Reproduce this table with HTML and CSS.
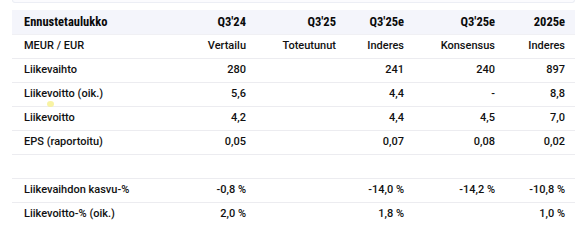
FILE: index.html
```html
<!DOCTYPE html>
<html lang="fi">

<head>
    <meta charset="UTF-8">
    <meta name="viewport" content="width=device-width, initial-scale=1.0">
    <title>Ennustetaulukko</title>
    <link rel="stylesheet" href="styles.css">
</head>

<body>
    <div class="wrap">
        <div class="card-edge"></div>
        <table class="forecast">
            <colgroup>
                <col class="c-label">
                <col class="c-q324">
                <col class="c-q325">
                <col class="c-q325e">
                <col class="c-cons">
                <col class="c-2025e">
            </colgroup>
            <thead>
                <tr>
                    <th>Ennustetaulukko</th>
                    <th>Q3'24</th>
                    <th>Q3'25</th>
                    <th>Q3'25e</th>
                    <th>Q3'25e</th>
                    <th>2025e</th>
                </tr>
            </thead>
            <tbody>
                <tr>
                    <td>MEUR / EUR</td>
                    <td>Vertailu</td>
                    <td>Toteutunut</td>
                    <td>Inderes</td>
                    <td>Konsensus</td>
                    <td>Inderes</td>
                </tr>
                <tr>
                    <td>Liikevaihto</td>
                    <td>280</td>
                    <td></td>
                    <td>241</td>
                    <td>240</td>
                    <td>897</td>
                </tr>
                <tr>
                    <td>Liikevoitto (oik.)</td>
                    <td>5,6</td>
                    <td></td>
                    <td>4,4</td>
                    <td>-</td>
                    <td>8,8</td>
                </tr>
                <tr>
                    <td>Liikevoitto</td>
                    <td>4,2</td>
                    <td></td>
                    <td>4,4</td>
                    <td>4,5</td>
                    <td>7,0</td>
                </tr>
                <tr>
                    <td>EPS (raportoitu)</td>
                    <td>0,05</td>
                    <td></td>
                    <td>0,07</td>
                    <td>0,08</td>
                    <td>0,02</td>
                </tr>
                <tr class="spacer">
                    <td></td>
                    <td></td>
                    <td></td>
                    <td></td>
                    <td></td>
                    <td></td>
                </tr>
                <tr>
                    <td>Liikevaihdon kasvu-%</td>
                    <td>-0,8 %</td>
                    <td></td>
                    <td>-14,0 %</td>
                    <td>-14,2 %</td>
                    <td>-10,8 %</td>
                </tr>
                <tr class="last">
                    <td>Liikevoitto-% (oik.)</td>
                    <td>2,0 %</td>
                    <td></td>
                    <td>1,8 %</td>
                    <td></td>
                    <td>1,0 %</td>
                </tr>
            </tbody>
        </table>
        <span class="cursor-dot"></span>
    </div>
</body>

</html>
```

FILE: styles.css
```css
* {
    padding: 0;
    margin: 0;
    box-sizing: border-box;
}

body {
    background: #fff;
    font-family: Roboto, "Liberation Sans", sans-serif;
    color: #111;
}

.wrap {
    position: relative;
    width: 563px;
    margin-left: 12px;
}

.card-edge {
    height: 3px;
    border: 1px solid #eceef5;
    border-top: 0;
    border-radius: 0 0 6px 6px;
    background: #fbfbfe;
}

.forecast {
    margin-top: 7px;
    width: 563px;
    table-layout: fixed;
    border-collapse: collapse;
    border-spacing: 0;
}

.c-label { width: 144px; }
.c-q324 { width: 100px; }
.c-q325 { width: 90px; }
.c-q325e { width: 68px; }
.c-cons { width: 91px; }
.c-2025e { width: 70px; }

th,
td {
    height: 24px;
    padding: 0 10px 0 12px;
    text-align: right;
    white-space: nowrap;
    font-size: 11px;
    line-height: 14px;
}

th:first-child,
td:first-child {
    text-align: left;
}

th {
    background-color: #f4f5fb;
    font-family: "Liberation Sans Narrow", "Roboto Condensed", Roboto, sans-serif;
    font-weight: bold;
    font-size: 12.5px;
    color: #0a0a0a;
}

td {
    border-bottom: 1px solid #ececf0;
    font-weight: 500;
    color: #111;
}

thead th {
    border-bottom: 1px solid #f0f0f4;
}

tr.last td {
    border-bottom: 0;
}

.cursor-dot {
    position: absolute;
    left: 35px;
    top: 101px;
    width: 7px;
    height: 6px;
    border-radius: 50%;
    background: #f6f08c;
    opacity: 0.8;
}
```
